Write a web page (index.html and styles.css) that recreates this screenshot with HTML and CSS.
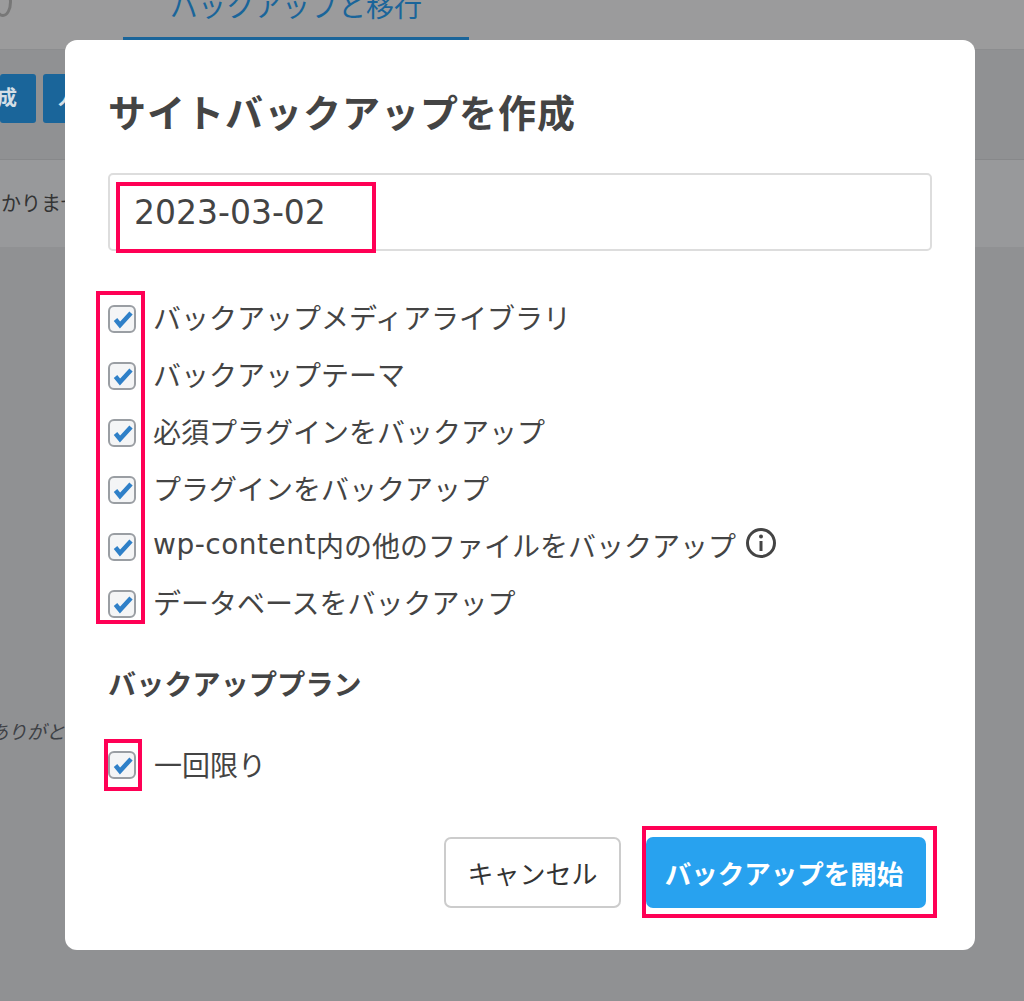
FILE: index.html
```html
<!DOCTYPE html>
<html lang="ja">
<head>
    <meta charset="UTF-8">
    <meta name="viewport" content="width=device-width, initial-scale=1.0">
    <title>サイトバックアップを作成</title>
    <link rel="stylesheet" href="styles.css">
</head>
<body>
    <!-- dimmed page behind the modal -->
    <div class="page">
        <div class="tabs">
            <span class="tab-logo"></span>
            <div class="tab-active">バックアップと移行</div>
        </div>
        <div class="toolbar">
            <span class="page-btn page-btn-first">成</span>
            <span class="page-btn page-btn-second">人</span>
        </div>
        <div class="notice">かりません</div>
        <p class="thanks">ありがとうございます</p>
    </div>

    <div class="modal">
        <h2 class="modal-title">サイトバックアップを作成</h2>
        <div class="name-field">
            <span class="name-value">2023-03-02</span>
            <span class="mark mark-name"></span>
        </div>

        <div class="options">
            <span class="mark mark-options"></span>
            <label class="option"><span class="check"><svg viewBox="0 0 28 28"><path d="M7.5 14.5L12 20 23 8"/></svg></span>バックアップメディアライブラリ</label>
            <label class="option"><span class="check"><svg viewBox="0 0 28 28"><path d="M7.5 14.5L12 20 23 8"/></svg></span>バックアップテーマ</label>
            <label class="option"><span class="check"><svg viewBox="0 0 28 28"><path d="M7.5 14.5L12 20 23 8"/></svg></span>必須プラグインをバックアップ</label>
            <label class="option"><span class="check"><svg viewBox="0 0 28 28"><path d="M7.5 14.5L12 20 23 8"/></svg></span>プラグインをバックアップ</label>
            <label class="option"><span class="check"><svg viewBox="0 0 28 28"><path d="M7.5 14.5L12 20 23 8"/></svg></span><span class="latin">wp-content</span>内の他のファイルをバックアップ
                <svg class="info" viewBox="0 0 32 32"><circle cx="16" cy="16" r="13.5"/><circle class="info-dot" cx="16" cy="9.5" r="2"/><path d="M16 14v10"/></svg>
            </label>
            <label class="option"><span class="check"><svg viewBox="0 0 28 28"><path d="M7.5 14.5L12 20 23 8"/></svg></span>データベースをバックアップ</label>
        </div>

        <h4 class="plan-title">バックアッププラン</h4>
        <div class="plan">
            <label class="option"><span class="check"><svg viewBox="0 0 28 28"><path d="M7.5 14.5L12 20 23 8"/></svg><span class="mark mark-plan"></span></span>一回限り</label>
        </div>

        <div class="actions">
            <button class="btn-cancel">キャンセル</button>
            <button class="btn-start">バックアップを開始<span class="mark mark-start"></span></button>
        </div>
    </div>
</body>
</html>
```

FILE: styles.css
```css
html, body {
    margin: 0;
    height: 1001px;
    overflow: hidden;
}
body {
    background-color: #909193;
    font-family: "Noto Sans CJK JP", "DejaVu Sans", sans-serif;
    color: #444;
    position: relative;
}

/* background page */
.page {
    height: 1001px;
    overflow: hidden;
}
.tabs {
    height: 50px;
    background-color: #9b9b9c;
    display: flex;
    box-sizing: border-box;
    border-bottom: 1px solid #8c8d8f;
}
.tab-logo {
    flex: none;
    width: 12px;
    height: 24px;
    margin: -13px 0 0 -6px;
    border: 3px solid #777;
    border-radius: 50%;
}
.tab-active {
    margin: -1px 0 0 111px;
    width: 346px;
    height: 41px;
    box-sizing: border-box;
    border-bottom: 3px solid #1a659a;
    color: #1a659a;
    font-size: 28px;
    line-height: 12px;
    text-align: center;
    white-space: nowrap;
}
.toolbar {
    display: flex;
    gap: 7px;
    margin-top: 24px;
    height: 50px;
}
.page-btn {
    flex: none;
    width: 50px;
    height: 49px;
    box-sizing: border-box;
    background-color: #1a659a;
    border-radius: 3px;
    color: #d5dfe6;
    font-size: 20px;
    font-weight: 700;
    line-height: 46px;
    white-space: nowrap;
}
.page-btn-first {
    width: 36px;
    padding-right: 19px;
    direction: rtl;
}
.page-btn-second {
    padding-left: 15px;
}
.notice {
    margin-top: 35px;
    height: 88px;
    box-sizing: border-box;
    background-color: #98999b;
    border-top: 1px solid #87888a;
    font-size: 20px;
    line-height: 86px;
    padding-left: 1px;
    white-space: nowrap;
    color: #333;
}
.thanks {
    margin: 470px 0 0;
    font-size: 19px;
    font-style: italic;
    color: #3d4045;
    text-indent: -11px;
    white-space: nowrap;
}

/* modal */
.modal {
    position: absolute;
    left: 65px;
    top: 40px;
    width: 910px;
    height: 910px;
    box-sizing: border-box;
    padding: 0 43px;
    background-color: #fff;
    border-radius: 12px;
}
.modal-title {
    margin: 44px 0 0;
    font-size: 38px;
    line-height: 54px;
    font-weight: 700;
    letter-spacing: 1px;
    color: #444;
}
.name-field {
    margin-top: 35px;
    height: 78px;
    box-sizing: border-box;
    border: 2px solid #ddd;
    border-radius: 5px;
    padding-left: 24px;
    display: flex;
    align-items: center;
    position: relative;
}
.name-value {
    font-family: "DejaVu Sans", sans-serif;
    font-size: 33px;
    color: #444;
}
.options {
    margin-top: 37px;
    position: relative;
}
.option {
    display: flex;
    align-items: center;
    height: 57px;
    font-size: 28px;
    font-family: "DejaVu Sans", "Noto Sans CJK JP", sans-serif;
    color: #444;
    white-space: nowrap;
}
.latin {
    letter-spacing: 0.5px;
}
.check {
    flex: none;
    position: relative;
    width: 28px;
    height: 28px;
    box-sizing: border-box;
    margin: 5px 17px 0 0;
    border: 2px solid #9a9ea3;
    border-radius: 6px;
    background-color: #f4f5f6;
}
.check svg {
    position: absolute;
    left: -2px;
    top: -2px;
    width: 28px;
    height: 28px;
    fill: none;
    stroke: #2f80c8;
    stroke-width: 4.5;
}
.info {
    flex: none;
    width: 32px;
    height: 32px;
    margin: -4px 0 0 9px;
    fill: none;
    stroke: #444;
    stroke-width: 3;
}
.info-dot {
    fill: #444;
    stroke: none;
}
.plan-title {
    margin: 33px 0 0;
    font-size: 28px;
    line-height: 40px;
    font-weight: 700;
    letter-spacing: 0.2px;
    color: #444;
}
.plan {
    margin-top: 32px;
}
.plan .check {
    margin: 2px 18px 0 0;
}
.actions {
    margin-top: 45px;
    display: flex;
    justify-content: flex-end;
    gap: 25px;
    padding-right: 6px;
}
.actions button {
    height: 71px;
    border-radius: 7px;
    font-family: "Noto Sans CJK JP", sans-serif;
    padding: 0;
    position: relative;
}
.btn-cancel {
    width: 177px;
    background-color: #fff;
    border: 2px solid #ccc;
    color: #333;
    font-size: 26px;
}
.actions .btn-start {
    width: 280px;
    padding-right: 4px;
    background-color: #28a2ef;
    border: none;
    color: #fff;
    font-size: 26.5px;
    font-weight: 700;
}

/* red annotation boxes drawn on the screenshot */
.mark {
    position: absolute;
    border: 4px solid #ff0055;
    box-sizing: border-box;
}
.mark-name {
    left: 6px;
    top: 7px;
    width: 260px;
    height: 71px;
}
.mark-options {
    left: -12px;
    top: 3px;
    width: 49px;
    height: 333px;
}
.mark-plan {
    left: -6px;
    top: -14px;
    width: 38px;
    height: 52px;
}
.mark-start {
    left: -4px;
    top: -11px;
    width: 295px;
    height: 92px;
}
```
